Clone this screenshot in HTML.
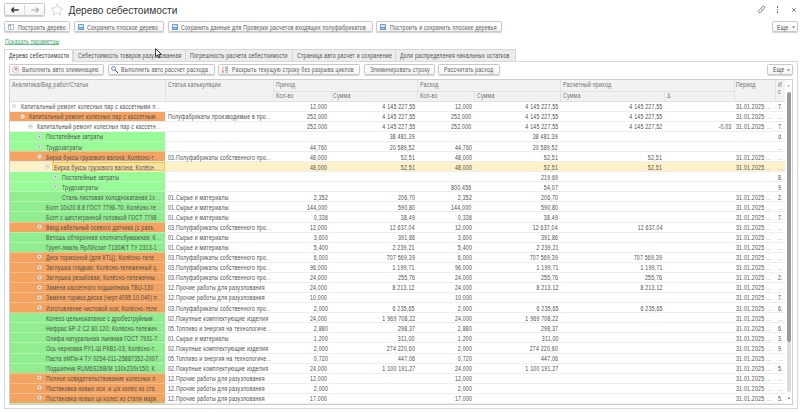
<!DOCTYPE html><html><head><meta charset="utf-8"><style>
*{margin:0;padding:0;box-sizing:border-box}
html,body{width:800px;height:412px;overflow:hidden;background:#fff}
body{position:relative;font-family:"Liberation Sans",sans-serif;font-size:7.0px;color:#4d4d4d}
div{position:absolute}
.t{white-space:pre;letter-spacing:0.3px;transform:scaleX(0.745);transform-origin:0 50%}
.tr{transform-origin:100% 50%}
.tc{transform-origin:50% 50%}
.nt{transform:none;letter-spacing:0}
.btn{border:1px solid #c8c8c8;border-radius:1.5px;background:linear-gradient(#fff,#f4f4f4);box-shadow:0 1px 1px rgba(0,0,0,0.18)}
.tab{background:#ececec;border:1px solid #d6d6d6;border-bottom:none}
.r{text-align:right}
.cell{overflow:hidden}
</style></head><body>
<div class="btn" style="left:4.3px;top:3.3px;width:40.3px;height:13px"></div>
<div style="left:24px;top:4.5px;width:1px;height:10.5px;background:#dcdcdc"></div>
<svg style="position:absolute;left:10px;top:6px" width="10" height="8" viewBox="0 0 10 8"><path d="M1.4 4H8.6M1.4 4L3.9 1.6M1.4 4L3.9 6.4" stroke="#3a3a3a" stroke-width="1.5" fill="none"/></svg>
<svg style="position:absolute;left:29.5px;top:6px" width="10" height="8" viewBox="0 0 10 8"><path d="M1 4H8.5M8.5 4L6.1 1.6M8.5 4L6.1 6.4" stroke="#a8a8a8" stroke-width="1.1" fill="none"/></svg>
<svg style="position:absolute;left:50px;top:3.3px" width="14" height="13.6" viewBox="0 0 24 24"><path d="M12 1.5l3.1 7 7.4.6-5.6 4.9 1.7 7.3L12 17.4l-6.6 3.9 1.7-7.3-5.6-4.9 7.4-.6z" fill="none" stroke="#c5cbd3" stroke-width="1.3"/></svg>
<div class="t nt" style="left:68.5px;top:3.6px;font-size:10.2px;line-height:13px;color:#333">Дерево себестоимости</div>
<svg style="position:absolute;left:756.5px;top:5.3px" width="9.5" height="9" viewBox="0 0 9.5 9"><g fill="none" stroke="#6a6a6a" stroke-width="0.9"><path d="M3.1 4.3L1.7 5.7a1.3 1.3 0 0 0 1.8 1.8L4.9 6.1a1.3 1.3 0 0 0 0-1.8"/><path d="M6.1 4.7L7.5 3.3a1.3 1.3 0 0 0-1.8-1.8L4.3 2.9a1.3 1.3 0 0 0 0 1.8"/></g></svg>
<div style="left:776.6px;top:6.3px;width:1.3px;height:1.3px;background:#555;border-radius:50%"></div>
<div style="left:776.6px;top:8.8px;width:1.3px;height:1.3px;background:#555;border-radius:50%"></div>
<div style="left:776.6px;top:11.3px;width:1.3px;height:1.3px;background:#555;border-radius:50%"></div>
<svg style="position:absolute;left:792.2px;top:7.8px" width="4" height="4" viewBox="0 0 4 4"><path d="M0.2 0.2L3.8 3.8M3.8 0.2L0.2 3.8" stroke="#666" stroke-width="0.8"/></svg>
<div class="btn" style="left:4.40px;top:21.3px;width:65.90px;height:10.999999999999996px"></div>
<div style="left:8.1px;top:24.1px;width:5.6px;height:5.7px;border:1px solid #b4bec8;background:#fff"></div><div style="left:10.3px;top:24.6px;width:0.8px;height:4.8px;background:#b0bac4"></div><div style="left:8.6px;top:24.6px;width:1.2px;height:1px;background:#3fc39a"></div>
<div class="t" style="left:17.6px;top:21.900000000000002px;line-height:10.999999999999996px;color:#5a5a5a">Построить дерево</div>
<div class="btn" style="left:74.20px;top:21.3px;width:89.60px;height:10.999999999999996px"></div>
<div style="left:77.9px;top:23.9px;width:6px;height:6px;background:#6b9dd6;border-radius:0.5px"></div><div style="left:78.9px;top:24.5px;width:4px;height:2.2px;background:#dfe8f2"></div><div style="left:79.4px;top:27.9px;width:3px;height:1.6px;background:#9fbddb"></div>
<div class="t" style="left:87px;top:21.900000000000002px;line-height:10.999999999999996px;color:#5a5a5a">Сохранить плоское дерево</div>
<div class="btn" style="left:167.90px;top:21.3px;width:204.80px;height:10.999999999999996px"></div>
<div style="left:171.5px;top:23.9px;width:6px;height:6px;background:#6b9dd6;border-radius:0.5px"></div><div style="left:172.5px;top:24.5px;width:4px;height:2.2px;background:#dfe8f2"></div><div style="left:173.0px;top:27.9px;width:3px;height:1.6px;background:#9fbddb"></div>
<div class="t" style="left:181px;top:21.900000000000002px;line-height:10.999999999999996px;color:#5a5a5a">Сохранить данные для Проверки расчетов входящих полуфабрикатов</div>
<div class="btn" style="left:376.20px;top:21.3px;width:125.50px;height:10.999999999999996px"></div>
<div style="left:379.8px;top:23.9px;width:6px;height:6px;background:#6b9dd6;border-radius:0.5px"></div><div style="left:380.8px;top:24.5px;width:4px;height:2.2px;background:#dfe8f2"></div><div style="left:381.3px;top:27.9px;width:3px;height:1.6px;background:#9fbddb"></div>
<div class="t" style="left:389.5px;top:21.900000000000002px;line-height:10.999999999999996px;color:#5a5a5a">Построить и сохранить плоские деревья</div>
<div class="btn" style="left:771.5px;top:21.3px;width:26px;height:11px"></div>
<div class="t" style="left:777.2px;top:22px;line-height:11px">Еще</div>
<svg style="position:absolute;left:791.6px;top:25.8px" width="3" height="3" viewBox="0 0 3 3"><path d="M0.2 0.6H2.8L1.5 2.2Z" fill="#555"/></svg>
<div class="t" style="left:5px;top:37.5px;line-height:8px;color:#3da367">Показать параметры</div>
<div style="left:5px;top:44.2px;width:53.5px;height:0.7px;background:#6bbd8c"></div>
<div style="left:4.2px;top:60.6px;width:794px;height:348.4px;border:1px solid #d8d8d8;background:#fff"></div>
<div class="tab" style="left:73px;top:49.4px;width:113.30000000000001px;height:11.4px"></div>
<div class="t" style="left:78px;top:50px;line-height:11.4px">Себестоимость товаров разузлованная</div>
<div class="tab" style="left:185.3px;top:49.4px;width:108.0px;height:11.4px"></div>
<div class="t" style="left:190.3px;top:50px;line-height:11.4px">Погрешность расчета себестоимости</div>
<div class="tab" style="left:292.3px;top:49.4px;width:103.69999999999999px;height:11.4px"></div>
<div class="t" style="left:297.3px;top:50px;line-height:11.4px">Страница авто расчет и сохранение</div>
<div class="tab" style="left:395px;top:49.4px;width:120.70000000000005px;height:11.4px"></div>
<div class="t" style="left:400px;top:50px;line-height:11.4px">Доли распределения начальных остатков</div>
<div style="left:4.2px;top:49.2px;width:69.3px;height:12.4px;border:1px solid #d8d8d8;border-bottom:none;background:#fff"></div>
<div class="t" style="left:9px;top:50px;line-height:11.4px;color:#333">Дерево себестоимости</div>
<div class="btn" style="left:9.00px;top:64.3px;width:95.00px;height:10.900000000000006px"></div>
<div style="left:12.3px;top:66.1px;width:6.6px;height:6.6px;border-radius:50%;border:1px solid #c9c9c9;background:#f4f4f4"></div><svg style="position:absolute;left:13.6px;top:67.4px" width="4" height="4" viewBox="0 0 4 4"><path d="M0.6 0.6L3.4 3.4M3.4 0.6L0.6 3.4" stroke="#ee5a60" stroke-width="0.8"/></svg>
<div class="t" style="left:22px;top:64.89999999999999px;line-height:10.900000000000006px;color:#5a5a5a">Выполнить авто элиминацию</div>
<div class="btn" style="left:107.60px;top:64.3px;width:107.40px;height:10.900000000000006px"></div>
<div style="left:111px;top:66px;width:5px;height:5px;border-radius:50%;border:1px solid #8a9cb4;background:#dce6f2"></div><svg style="position:absolute;left:114.5px;top:69.5px" width="3.5" height="3.5" viewBox="0 0 4 4"><path d="M0.3 0.3L3.6 3.6" stroke="#333" stroke-width="1.1"/></svg>
<div class="t" style="left:121px;top:64.89999999999999px;line-height:10.900000000000006px;color:#5a5a5a">Выполнить авто рассчет расхода</div>
<div class="btn" style="left:218.10px;top:64.3px;width:142.20px;height:10.900000000000006px"></div>
<svg style="position:absolute;left:220.5px;top:65.8px" width="8" height="8" viewBox="0 0 8 8"><path d="M1.9 0.4V6.2" stroke="#f07a4a" stroke-width="0.7"/><path d="M0.7 5.2L1.9 7.4L3.1 5.2Z" fill="#f07a4a"/><path d="M4.1 1.1H7.1M4.1 2.9H7.1M4.1 4.7H7.1" stroke="#7a7a7a" stroke-width="0.9"/><path d="M4.1 6.4H7.1" stroke="#b0b0b0" stroke-width="0.8"/></svg>
<div class="t" style="left:231.6px;top:64.89999999999999px;line-height:10.900000000000006px;color:#5a5a5a">Раскрыть текущую строку без разрыва циклов</div>
<div class="btn" style="left:363.70px;top:64.3px;width:71.00px;height:10.900000000000006px"></div>
<div class="t" style="left:369.5px;top:64.89999999999999px;line-height:10.900000000000006px;color:#5a5a5a">Элиминировать строку</div>
<div class="btn" style="left:438.10px;top:64.3px;width:62.20px;height:10.900000000000006px"></div>
<div class="t" style="left:444px;top:64.89999999999999px;line-height:10.900000000000006px;color:#5a5a5a">Рассчитать расход</div>
<div class="btn" style="left:767px;top:64.3px;width:25.5px;height:10.9px"></div>
<div class="t" style="left:773px;top:65px;line-height:10.9px">Еще</div>
<svg style="position:absolute;left:787.1px;top:68.8px" width="3" height="3" viewBox="0 0 3 3"><path d="M0.2 0.6H2.8L1.5 2.2Z" fill="#555"/></svg>
<div style="left:9.3px;top:79.3px;width:783.5px;height:325.7px;border:1px solid #cfcfcf;background:#fff"></div>
<div style="left:10.3px;top:80.3px;width:774.7px;height:21.0px;background:#f2f2f2"></div>
<div style="left:10.3px;top:100.8px;width:774.7px;height:1px;background:#e0e0e0"></div>
<div style="left:165.4px;top:80.3px;width:1px;height:21.0px;background:#e2e2e2"></div>
<div style="left:273.4px;top:80.3px;width:1px;height:21.0px;background:#e2e2e2"></div>
<div style="left:330.6px;top:90.5px;width:1px;height:10.799999999999997px;background:#e2e2e2"></div>
<div style="left:417px;top:80.3px;width:1px;height:21.0px;background:#e2e2e2"></div>
<div style="left:473.5px;top:90.5px;width:1px;height:10.799999999999997px;background:#e2e2e2"></div>
<div style="left:560px;top:80.3px;width:1px;height:21.0px;background:#e2e2e2"></div>
<div style="left:664.3px;top:90.5px;width:1px;height:10.799999999999997px;background:#e2e2e2"></div>
<div style="left:733.7px;top:80.3px;width:1px;height:21.0px;background:#e2e2e2"></div>
<div style="left:775.3px;top:80.3px;width:1px;height:21.0px;background:#e2e2e2"></div>
<div style="left:273.4px;top:90.5px;width:460.30000000000007px;height:1px;background:#e2e2e2"></div>
<div class="t" style="left:12px;top:81.1px;line-height:8px;color:#6e6e6e">Аналитика/Вид работ/Статьи</div>
<div class="t" style="left:167.6px;top:81.1px;line-height:8px;color:#6e6e6e">Статья калькуляции</div>
<div class="t" style="left:275.8px;top:81.1px;line-height:8px;color:#6e6e6e">Приход</div>
<div class="t" style="left:275.8px;top:92.3px;line-height:8px;color:#6e6e6e">Кол-во</div>
<div class="t" style="left:333px;top:92.3px;line-height:8px;color:#6e6e6e">Сумма</div>
<div class="t" style="left:420px;top:81.1px;line-height:8px;color:#6e6e6e">Расход</div>
<div class="t" style="left:420px;top:92.3px;line-height:8px;color:#6e6e6e">Кол-во</div>
<div class="t" style="left:476.7px;top:92.3px;line-height:8px;color:#6e6e6e">Сумма</div>
<div class="t" style="left:562.5px;top:81.1px;line-height:8px;color:#6e6e6e">Расчетный приход</div>
<div class="t" style="left:562.5px;top:92.3px;line-height:8px;color:#6e6e6e">Сумма</div>
<div class="t" style="left:667px;top:92.3px;line-height:8px;color:#6e6e6e">Δ</div>
<div class="t" style="left:736px;top:81.1px;line-height:8px;color:#6e6e6e">Период</div>
<div class="t" style="left:778px;top:81.1px;line-height:8px;color:#6e6e6e">И</div>
<div class="t" style="left:778px;top:87.8px;line-height:8px;color:#6e6e6e">с</div>
<div style="left:10.3px;top:110.977px;width:155.1px;height:10.077px;background:#f4a460"></div>
<div style="left:10.3px;top:131.131px;width:155.1px;height:10.077px;background:#98fb98"></div>
<div style="left:10.3px;top:141.208px;width:155.1px;height:10.077px;background:#98fb98"></div>
<div style="left:10.3px;top:151.285px;width:155.1px;height:10.077px;background:#f4a460"></div>
<div style="left:10.3px;top:161.36200000000002px;width:774.7px;height:10.077px;background:#fdf1c8"></div>
<div style="left:10.3px;top:171.43900000000002px;width:155.1px;height:10.077px;background:#98fb98"></div>
<div style="left:10.3px;top:181.51600000000002px;width:155.1px;height:10.077px;background:#98fb98"></div>
<div style="left:10.3px;top:191.59300000000002px;width:155.1px;height:10.077px;background:#90ee90"></div>
<div style="left:10.3px;top:201.67000000000002px;width:155.1px;height:10.077px;background:#90ee90"></div>
<div style="left:10.3px;top:211.747px;width:155.1px;height:10.077px;background:#90ee90"></div>
<div style="left:10.3px;top:221.824px;width:155.1px;height:10.077px;background:#f4a460"></div>
<div style="left:10.3px;top:231.901px;width:155.1px;height:10.077px;background:#90ee90"></div>
<div style="left:10.3px;top:241.978px;width:155.1px;height:10.077px;background:#90ee90"></div>
<div style="left:10.3px;top:252.055px;width:155.1px;height:10.077px;background:#f4a460"></div>
<div style="left:10.3px;top:262.132px;width:155.1px;height:10.077px;background:#f4a460"></div>
<div style="left:10.3px;top:272.209px;width:155.1px;height:10.077px;background:#f4a460"></div>
<div style="left:10.3px;top:282.286px;width:155.1px;height:10.077px;background:#f4a460"></div>
<div style="left:10.3px;top:292.363px;width:155.1px;height:10.077px;background:#f4a460"></div>
<div style="left:10.3px;top:302.44px;width:155.1px;height:10.077px;background:#f4a460"></div>
<div style="left:10.3px;top:312.517px;width:155.1px;height:10.077px;background:#90ee90"></div>
<div style="left:10.3px;top:322.594px;width:155.1px;height:10.077px;background:#90ee90"></div>
<div style="left:10.3px;top:332.671px;width:155.1px;height:10.077px;background:#90ee90"></div>
<div style="left:10.3px;top:342.74800000000005px;width:155.1px;height:10.077px;background:#90ee90"></div>
<div style="left:10.3px;top:352.82500000000005px;width:155.1px;height:10.077px;background:#90ee90"></div>
<div style="left:10.3px;top:362.90200000000004px;width:155.1px;height:10.077px;background:#90ee90"></div>
<div style="left:10.3px;top:372.97900000000004px;width:155.1px;height:10.077px;background:#f4a460"></div>
<div style="left:10.3px;top:383.05600000000004px;width:155.1px;height:10.077px;background:#f4a460"></div>
<div style="left:10.3px;top:393.13300000000004px;width:155.1px;height:10.077px;background:#f4a460"></div>
<div style="left:10.3px;top:403.21000000000004px;width:155.1px;height:0.7899999999999636px;background:#90ee90"></div>
<div style="left:165.4px;top:110.677px;width:619.6px;height:1px;background:#eeeeee"></div>
<div style="left:10.3px;top:110.677px;width:155.1px;height:1px;background:#eeeeee"></div>
<div style="left:165.4px;top:120.754px;width:619.6px;height:1px;background:#eeeeee"></div>
<div style="left:10.3px;top:120.754px;width:155.1px;height:1px;background:#eeeeee"></div>
<div style="left:165.4px;top:130.831px;width:619.6px;height:1px;background:#eeeeee"></div>
<div style="left:10.3px;top:130.831px;width:155.1px;height:1px;background:#eeeeee"></div>
<div style="left:165.4px;top:140.908px;width:619.6px;height:1px;background:#eeeeee"></div>
<div style="left:10.3px;top:140.908px;width:155.1px;height:1px;background:rgba(255,255,255,0.3)"></div>
<div style="left:165.4px;top:150.98499999999999px;width:619.6px;height:1px;background:#eeeeee"></div>
<div style="left:10.3px;top:150.98499999999999px;width:155.1px;height:1px;background:rgba(255,255,255,0.3)"></div>
<div style="left:165.4px;top:161.062px;width:619.6px;height:1px;background:#eeeeee"></div>
<div style="left:10.3px;top:161.062px;width:155.1px;height:1px;background:#eeeeee"></div>
<div style="left:165.4px;top:171.139px;width:619.6px;height:1px;background:#eeeeee"></div>
<div style="left:10.3px;top:171.139px;width:155.1px;height:1px;background:#eeeeee"></div>
<div style="left:165.4px;top:181.216px;width:619.6px;height:1px;background:#eeeeee"></div>
<div style="left:10.3px;top:181.216px;width:155.1px;height:1px;background:rgba(255,255,255,0.3)"></div>
<div style="left:165.4px;top:191.293px;width:619.6px;height:1px;background:#eeeeee"></div>
<div style="left:10.3px;top:191.293px;width:155.1px;height:1px;background:rgba(255,255,255,0.3)"></div>
<div style="left:165.4px;top:201.37px;width:619.6px;height:1px;background:#eeeeee"></div>
<div style="left:10.3px;top:201.37px;width:155.1px;height:1px;background:rgba(255,255,255,0.3)"></div>
<div style="left:165.4px;top:211.447px;width:619.6px;height:1px;background:#eeeeee"></div>
<div style="left:10.3px;top:211.447px;width:155.1px;height:1px;background:rgba(255,255,255,0.3)"></div>
<div style="left:165.4px;top:221.524px;width:619.6px;height:1px;background:#eeeeee"></div>
<div style="left:10.3px;top:221.524px;width:155.1px;height:1px;background:rgba(255,255,255,0.3)"></div>
<div style="left:165.4px;top:231.601px;width:619.6px;height:1px;background:#eeeeee"></div>
<div style="left:10.3px;top:231.601px;width:155.1px;height:1px;background:rgba(255,255,255,0.3)"></div>
<div style="left:165.4px;top:241.678px;width:619.6px;height:1px;background:#eeeeee"></div>
<div style="left:10.3px;top:241.678px;width:155.1px;height:1px;background:rgba(255,255,255,0.3)"></div>
<div style="left:165.4px;top:251.755px;width:619.6px;height:1px;background:#eeeeee"></div>
<div style="left:10.3px;top:251.755px;width:155.1px;height:1px;background:rgba(255,255,255,0.3)"></div>
<div style="left:165.4px;top:261.832px;width:619.6px;height:1px;background:#eeeeee"></div>
<div style="left:10.3px;top:261.832px;width:155.1px;height:1px;background:rgba(255,255,255,0.3)"></div>
<div style="left:165.4px;top:271.909px;width:619.6px;height:1px;background:#eeeeee"></div>
<div style="left:10.3px;top:271.909px;width:155.1px;height:1px;background:rgba(255,255,255,0.3)"></div>
<div style="left:165.4px;top:281.986px;width:619.6px;height:1px;background:#eeeeee"></div>
<div style="left:10.3px;top:281.986px;width:155.1px;height:1px;background:rgba(255,255,255,0.3)"></div>
<div style="left:165.4px;top:292.063px;width:619.6px;height:1px;background:#eeeeee"></div>
<div style="left:10.3px;top:292.063px;width:155.1px;height:1px;background:rgba(255,255,255,0.3)"></div>
<div style="left:165.4px;top:302.14px;width:619.6px;height:1px;background:#eeeeee"></div>
<div style="left:10.3px;top:302.14px;width:155.1px;height:1px;background:rgba(255,255,255,0.3)"></div>
<div style="left:165.4px;top:312.217px;width:619.6px;height:1px;background:#eeeeee"></div>
<div style="left:10.3px;top:312.217px;width:155.1px;height:1px;background:rgba(255,255,255,0.3)"></div>
<div style="left:165.4px;top:322.294px;width:619.6px;height:1px;background:#eeeeee"></div>
<div style="left:10.3px;top:322.294px;width:155.1px;height:1px;background:rgba(255,255,255,0.3)"></div>
<div style="left:165.4px;top:332.371px;width:619.6px;height:1px;background:#eeeeee"></div>
<div style="left:10.3px;top:332.371px;width:155.1px;height:1px;background:rgba(255,255,255,0.3)"></div>
<div style="left:165.4px;top:342.44800000000004px;width:619.6px;height:1px;background:#eeeeee"></div>
<div style="left:10.3px;top:342.44800000000004px;width:155.1px;height:1px;background:rgba(255,255,255,0.3)"></div>
<div style="left:165.4px;top:352.52500000000003px;width:619.6px;height:1px;background:#eeeeee"></div>
<div style="left:10.3px;top:352.52500000000003px;width:155.1px;height:1px;background:rgba(255,255,255,0.3)"></div>
<div style="left:165.4px;top:362.60200000000003px;width:619.6px;height:1px;background:#eeeeee"></div>
<div style="left:10.3px;top:362.60200000000003px;width:155.1px;height:1px;background:rgba(255,255,255,0.3)"></div>
<div style="left:165.4px;top:372.67900000000003px;width:619.6px;height:1px;background:#eeeeee"></div>
<div style="left:10.3px;top:372.67900000000003px;width:155.1px;height:1px;background:rgba(255,255,255,0.3)"></div>
<div style="left:165.4px;top:382.75600000000003px;width:619.6px;height:1px;background:#eeeeee"></div>
<div style="left:10.3px;top:382.75600000000003px;width:155.1px;height:1px;background:rgba(255,255,255,0.3)"></div>
<div style="left:165.4px;top:392.833px;width:619.6px;height:1px;background:#eeeeee"></div>
<div style="left:10.3px;top:392.833px;width:155.1px;height:1px;background:rgba(255,255,255,0.3)"></div>
<div style="left:165.4px;top:402.91px;width:619.6px;height:1px;background:#eeeeee"></div>
<div style="left:10.3px;top:402.91px;width:155.1px;height:1px;background:rgba(255,255,255,0.3)"></div>
<div style="left:12.05px;top:103.85px;width:4.4px;height:4.4px;border-radius:50%;background:#dcdcdc"></div>
<div class="t" style="left:20.75px;top:102.3px;line-height:10.05px">Капитальный ремонт колесных пар с кассетными п<span style="color:#9a9a9a">...</span></div>
<div class="t tr" style="right:472.4px;top:102.3px;line-height:10.05px">12,000</div>
<div class="t tr" style="right:385px;top:102.3px;line-height:10.05px">4 145 227,55</div>
<div class="t tr" style="right:328.25px;top:102.3px;line-height:10.05px">12,000</div>
<div class="t tr" style="right:241.75px;top:102.3px;line-height:10.05px">4 145 227,55</div>
<div class="t tr" style="right:137.5px;top:102.3px;line-height:10.05px">4 145 227,55</div>
<div class="t" style="left:735.7px;top:102.3px;line-height:10.05px">31.01.2025 <span style="color:#9a9a9a">...</span></div>
<div class="t" style="left:777.6999999999999px;top:102.3px;line-height:10.05px">7.</div>
<svg style="position:absolute;left:20.0px;top:113.61px" width="5" height="5" viewBox="-2.5 -2.5 5 5"><circle r="2.05" fill="#efefef" stroke="#c4c4c4" stroke-width="0.5"/><path d="M-1.1 0H1.1" stroke="#a0a0a0" stroke-width="0.7"/></svg>
<div class="t" style="left:29.0px;top:112.36px;line-height:10.05px">Капитальный ремонт колесных пар с кассетным<span style="color:#9a9a9a">...</span></div>
<div class="t" style="left:167.70000000000002px;top:112.36px;line-height:10.05px">Полуфабрикаты производимые в про<span style="color:#9a9a9a">...</span></div>
<div class="t tr" style="right:472.4px;top:112.36px;line-height:10.05px">252,000</div>
<div class="t tr" style="right:385px;top:112.36px;line-height:10.05px">4 145 227,55</div>
<div class="t tr" style="right:328.25px;top:112.36px;line-height:10.05px">252,000</div>
<div class="t tr" style="right:241.75px;top:112.36px;line-height:10.05px">4 145 227,55</div>
<div class="t tr" style="right:137.5px;top:112.36px;line-height:10.05px">4 145 227,55</div>
<div class="t" style="left:735.7px;top:112.36px;line-height:10.05px">31.01.2025 <span style="color:#9a9a9a">...</span></div>
<div class="t" style="left:777.6999999999999px;top:112.36px;line-height:10.05px"><span style="color:#9a9a9a">...</span></div>
<svg style="position:absolute;left:28.25px;top:123.67px" width="5" height="5" viewBox="-2.5 -2.5 5 5"><circle r="2.05" fill="#efefef" stroke="#c4c4c4" stroke-width="0.5"/><path d="M-1.1 0H1.1" stroke="#a0a0a0" stroke-width="0.7"/></svg>
<div class="t" style="left:37.25px;top:122.42px;line-height:10.05px">Капитальный ремонт колесных пар с кассетн<span style="color:#9a9a9a">...</span></div>
<div class="t tr" style="right:472.4px;top:122.42px;line-height:10.05px">252,000</div>
<div class="t tr" style="right:385px;top:122.42px;line-height:10.05px">4 145 227,55</div>
<div class="t tr" style="right:328.25px;top:122.42px;line-height:10.05px">252,000</div>
<div class="t tr" style="right:241.75px;top:122.42px;line-height:10.05px">4 145 227,55</div>
<div class="t tr" style="right:137.5px;top:122.42px;line-height:10.05px">4 145 227,52</div>
<div class="t tr" style="right:69.0px;top:122.42px;line-height:10.05px">-0,03</div>
<div class="t" style="left:735.7px;top:122.42px;line-height:10.05px">31.01.2025 <span style="color:#9a9a9a">...</span></div>
<div class="t" style="left:777.6999999999999px;top:122.42px;line-height:10.05px">7.</div>
<svg style="position:absolute;left:36.5px;top:133.73000000000002px" width="5" height="5" viewBox="-2.5 -2.5 5 5"><circle r="2.05" fill="#efefef" stroke="#c4c4c4" stroke-width="0.5"/><path d="M-0.9 0H0.9M0 -0.9V0.9" stroke="#7a7a7a" stroke-width="0.6"/></svg>
<div class="t" style="left:45.5px;top:132.48000000000002px;line-height:10.05px">Постатейные затраты</div>
<div class="t tr" style="right:385px;top:132.48000000000002px;line-height:10.05px">38 481,39</div>
<div class="t tr" style="right:241.75px;top:132.48000000000002px;line-height:10.05px">38 481,39</div>
<div class="t" style="left:777.6999999999999px;top:132.48000000000002px;line-height:10.05px">d.</div>
<svg style="position:absolute;left:36.5px;top:143.79000000000002px" width="5" height="5" viewBox="-2.5 -2.5 5 5"><circle r="2.05" fill="#efefef" stroke="#c4c4c4" stroke-width="0.5"/><path d="M-0.9 0H0.9M0 -0.9V0.9" stroke="#7a7a7a" stroke-width="0.6"/></svg>
<div class="t" style="left:45.5px;top:142.54000000000002px;line-height:10.05px">Трудозатраты</div>
<div class="t tr" style="right:472.4px;top:142.54000000000002px;line-height:10.05px">44,760</div>
<div class="t tr" style="right:385px;top:142.54000000000002px;line-height:10.05px">20 589,52</div>
<div class="t tr" style="right:328.25px;top:142.54000000000002px;line-height:10.05px">44,760</div>
<div class="t tr" style="right:241.75px;top:142.54000000000002px;line-height:10.05px">20 589,52</div>
<div class="t" style="left:777.6999999999999px;top:142.54000000000002px;line-height:10.05px"><span style="color:#9a9a9a">...</span></div>
<svg style="position:absolute;left:36.5px;top:153.85000000000002px" width="5" height="5" viewBox="-2.5 -2.5 5 5"><circle r="2.05" fill="#efefef" stroke="#c4c4c4" stroke-width="0.5"/><path d="M-1.1 0H1.1" stroke="#a0a0a0" stroke-width="0.7"/></svg>
<div class="t" style="left:45.5px;top:152.60000000000002px;line-height:10.05px">Бирка буксы грузового вагона; Колёсно-т<span style="color:#9a9a9a">...</span></div>
<div class="t" style="left:167.70000000000002px;top:152.60000000000002px;line-height:10.05px">03.Полуфабрикаты собственного про<span style="color:#9a9a9a">...</span></div>
<div class="t tr" style="right:472.4px;top:152.60000000000002px;line-height:10.05px">48,000</div>
<div class="t tr" style="right:385px;top:152.60000000000002px;line-height:10.05px">52,51</div>
<div class="t tr" style="right:328.25px;top:152.60000000000002px;line-height:10.05px">48,000</div>
<div class="t tr" style="right:241.75px;top:152.60000000000002px;line-height:10.05px">52,51</div>
<div class="t tr" style="right:137.5px;top:152.60000000000002px;line-height:10.05px">52,51</div>
<div class="t" style="left:735.7px;top:152.60000000000002px;line-height:10.05px">31.01.2025 <span style="color:#9a9a9a">...</span></div>
<div class="t" style="left:777.6999999999999px;top:152.60000000000002px;line-height:10.05px"><span style="color:#9a9a9a">...</span></div>
<svg style="position:absolute;left:44.75px;top:163.91000000000003px" width="5" height="5" viewBox="-2.5 -2.5 5 5"><circle r="2.05" fill="#efefef" stroke="#c4c4c4" stroke-width="0.5"/><path d="M-1.1 0H1.1" stroke="#a0a0a0" stroke-width="0.7"/></svg>
<div style="left:52px;top:161.96200000000002px;width:113.4px;height:9.3px;border:1.4px solid #f7c540;background:#f9e2a0"></div>
<div class="t" style="left:53.75px;top:162.66000000000003px;line-height:10.05px">Бирка буксы грузового вагона; Колёсн<span style="color:#9a9a9a">...</span></div>
<div class="t tr" style="right:472.4px;top:162.66000000000003px;line-height:10.05px">48,000</div>
<div class="t tr" style="right:385px;top:162.66000000000003px;line-height:10.05px">52,51</div>
<div class="t tr" style="right:328.25px;top:162.66000000000003px;line-height:10.05px">48,000</div>
<div class="t tr" style="right:241.75px;top:162.66000000000003px;line-height:10.05px">52,51</div>
<div class="t tr" style="right:137.5px;top:162.66000000000003px;line-height:10.05px">52,51</div>
<div class="t" style="left:735.7px;top:162.66000000000003px;line-height:10.05px">31.01.2025 <span style="color:#9a9a9a">...</span></div>
<div class="t" style="left:777.6999999999999px;top:162.66000000000003px;line-height:10.05px"><span style="color:#9a9a9a">...</span></div>
<svg style="position:absolute;left:53.0px;top:173.97000000000003px" width="5" height="5" viewBox="-2.5 -2.5 5 5"><circle r="2.05" fill="#efefef" stroke="#c4c4c4" stroke-width="0.5"/><path d="M-0.9 0H0.9M0 -0.9V0.9" stroke="#7a7a7a" stroke-width="0.6"/></svg>
<div class="t" style="left:62.0px;top:172.72000000000003px;line-height:10.05px">Постатейные затраты</div>
<div class="t tr" style="right:241.75px;top:172.72000000000003px;line-height:10.05px">219,69</div>
<div class="t" style="left:777.6999999999999px;top:172.72000000000003px;line-height:10.05px">8.</div>
<svg style="position:absolute;left:53.0px;top:184.03000000000003px" width="5" height="5" viewBox="-2.5 -2.5 5 5"><circle r="2.05" fill="#efefef" stroke="#c4c4c4" stroke-width="0.5"/><path d="M-0.9 0H0.9M0 -0.9V0.9" stroke="#7a7a7a" stroke-width="0.6"/></svg>
<div class="t" style="left:62.0px;top:182.78000000000003px;line-height:10.05px">Трудозатраты</div>
<div class="t tr" style="right:328.25px;top:182.78000000000003px;line-height:10.05px">800,456</div>
<div class="t tr" style="right:241.75px;top:182.78000000000003px;line-height:10.05px">54,07</div>
<div class="t" style="left:777.6999999999999px;top:182.78000000000003px;line-height:10.05px">9.</div>
<div class="t" style="left:62.0px;top:192.84000000000003px;line-height:10.05px">Сталь листовая холоднокатаная 1х<span style="color:#9a9a9a">...</span></div>
<div class="t" style="left:167.70000000000002px;top:192.84000000000003px;line-height:10.05px">01.Сырье и материалы</div>
<div class="t tr" style="right:472.4px;top:192.84000000000003px;line-height:10.05px">2,352</div>
<div class="t tr" style="right:385px;top:192.84000000000003px;line-height:10.05px">206,70</div>
<div class="t tr" style="right:328.25px;top:192.84000000000003px;line-height:10.05px">2,352</div>
<div class="t tr" style="right:241.75px;top:192.84000000000003px;line-height:10.05px">206,70</div>
<div class="t" style="left:735.7px;top:192.84000000000003px;line-height:10.05px">31.01.2025 <span style="color:#9a9a9a">...</span></div>
<div class="t" style="left:777.6999999999999px;top:192.84000000000003px;line-height:10.05px">2.</div>
<div class="t" style="left:45.5px;top:202.90000000000003px;line-height:10.05px">Болт 10х20 8.8 ГОСТ 7798-70; Колёсно-те<span style="color:#9a9a9a">...</span></div>
<div class="t" style="left:167.70000000000002px;top:202.90000000000003px;line-height:10.05px">01.Сырье и материалы</div>
<div class="t tr" style="right:472.4px;top:202.90000000000003px;line-height:10.05px">144,000</div>
<div class="t tr" style="right:385px;top:202.90000000000003px;line-height:10.05px">590,80</div>
<div class="t tr" style="right:328.25px;top:202.90000000000003px;line-height:10.05px">144,000</div>
<div class="t tr" style="right:241.75px;top:202.90000000000003px;line-height:10.05px">590,80</div>
<div class="t" style="left:735.7px;top:202.90000000000003px;line-height:10.05px">31.01.2025 <span style="color:#9a9a9a">...</span></div>
<div class="t" style="left:777.6999999999999px;top:202.90000000000003px;line-height:10.05px"><span style="color:#9a9a9a">...</span></div>
<div class="t" style="left:45.5px;top:212.96000000000004px;line-height:10.05px">Болт с шестигранной головкой ГОСТ 7798<span style="color:#9a9a9a">...</span></div>
<div class="t" style="left:167.70000000000002px;top:212.96000000000004px;line-height:10.05px">01.Сырье и материалы</div>
<div class="t tr" style="right:472.4px;top:212.96000000000004px;line-height:10.05px">0,336</div>
<div class="t tr" style="right:385px;top:212.96000000000004px;line-height:10.05px">38,49</div>
<div class="t tr" style="right:328.25px;top:212.96000000000004px;line-height:10.05px">0,336</div>
<div class="t tr" style="right:241.75px;top:212.96000000000004px;line-height:10.05px">38,49</div>
<div class="t" style="left:735.7px;top:212.96000000000004px;line-height:10.05px">31.01.2025 <span style="color:#9a9a9a">...</span></div>
<div class="t" style="left:777.6999999999999px;top:212.96000000000004px;line-height:10.05px">7.</div>
<svg style="position:absolute;left:36.5px;top:224.27px" width="5" height="5" viewBox="-2.5 -2.5 5 5"><circle r="2.05" fill="#efefef" stroke="#c4c4c4" stroke-width="0.5"/><path d="M-0.9 0H0.9M0 -0.9V0.9" stroke="#7a7a7a" stroke-width="0.6"/></svg>
<div class="t" style="left:45.5px;top:223.02px;line-height:10.05px">Ввод кабельный осевого датчика (с разъ<span style="color:#9a9a9a">...</span></div>
<div class="t" style="left:167.70000000000002px;top:223.02px;line-height:10.05px">03.Полуфабрикаты собственного про<span style="color:#9a9a9a">...</span></div>
<div class="t tr" style="right:472.4px;top:223.02px;line-height:10.05px">12,000</div>
<div class="t tr" style="right:385px;top:223.02px;line-height:10.05px">12 637,04</div>
<div class="t tr" style="right:328.25px;top:223.02px;line-height:10.05px">12,000</div>
<div class="t tr" style="right:241.75px;top:223.02px;line-height:10.05px">12 637,04</div>
<div class="t tr" style="right:137.5px;top:223.02px;line-height:10.05px">12 637,04</div>
<div class="t" style="left:735.7px;top:223.02px;line-height:10.05px">31.01.2025 <span style="color:#9a9a9a">...</span></div>
<div class="t" style="left:777.6999999999999px;top:223.02px;line-height:10.05px"><span style="color:#9a9a9a">...</span></div>
<div class="t" style="left:45.5px;top:233.08px;line-height:10.05px">Ветошь обтирочная хлопчатобумажная; К<span style="color:#9a9a9a">...</span></div>
<div class="t" style="left:167.70000000000002px;top:233.08px;line-height:10.05px">01.Сырье и материалы</div>
<div class="t tr" style="right:472.4px;top:233.08px;line-height:10.05px">3,600</div>
<div class="t tr" style="right:385px;top:233.08px;line-height:10.05px">391,86</div>
<div class="t tr" style="right:328.25px;top:233.08px;line-height:10.05px">3,600</div>
<div class="t tr" style="right:241.75px;top:233.08px;line-height:10.05px">391,86</div>
<div class="t" style="left:735.7px;top:233.08px;line-height:10.05px">31.01.2025 <span style="color:#9a9a9a">...</span></div>
<div class="t" style="left:777.6999999999999px;top:233.08px;line-height:10.05px"><span style="color:#9a9a9a">...</span></div>
<div class="t" style="left:45.5px;top:243.14000000000001px;line-height:10.05px">Грунт-эмаль ЯрЛИсоат 7130ЖТ ТУ 2313-1<span style="color:#9a9a9a">...</span></div>
<div class="t" style="left:167.70000000000002px;top:243.14000000000001px;line-height:10.05px">01.Сырье и материалы</div>
<div class="t tr" style="right:472.4px;top:243.14000000000001px;line-height:10.05px">5,400</div>
<div class="t tr" style="right:385px;top:243.14000000000001px;line-height:10.05px">2 239,21</div>
<div class="t tr" style="right:328.25px;top:243.14000000000001px;line-height:10.05px">5,400</div>
<div class="t tr" style="right:241.75px;top:243.14000000000001px;line-height:10.05px">2 239,21</div>
<div class="t" style="left:735.7px;top:243.14000000000001px;line-height:10.05px">31.01.2025 <span style="color:#9a9a9a">...</span></div>
<div class="t" style="left:777.6999999999999px;top:243.14000000000001px;line-height:10.05px"><span style="color:#9a9a9a">...</span></div>
<svg style="position:absolute;left:36.5px;top:254.45px" width="5" height="5" viewBox="-2.5 -2.5 5 5"><circle r="2.05" fill="#efefef" stroke="#c4c4c4" stroke-width="0.5"/><path d="M-0.9 0H0.9M0 -0.9V0.9" stroke="#7a7a7a" stroke-width="0.6"/></svg>
<div class="t" style="left:45.5px;top:253.20000000000002px;line-height:10.05px">Диск тормозной (для КТЦ); Колёсно-теле<span style="color:#9a9a9a">...</span></div>
<div class="t" style="left:167.70000000000002px;top:253.20000000000002px;line-height:10.05px">03.Полуфабрикаты собственного про<span style="color:#9a9a9a">...</span></div>
<div class="t tr" style="right:472.4px;top:253.20000000000002px;line-height:10.05px">6,000</div>
<div class="t tr" style="right:385px;top:253.20000000000002px;line-height:10.05px">707 569,39</div>
<div class="t tr" style="right:328.25px;top:253.20000000000002px;line-height:10.05px">6,000</div>
<div class="t tr" style="right:241.75px;top:253.20000000000002px;line-height:10.05px">707 569,39</div>
<div class="t tr" style="right:137.5px;top:253.20000000000002px;line-height:10.05px">707 569,39</div>
<div class="t" style="left:735.7px;top:253.20000000000002px;line-height:10.05px">31.01.2025 <span style="color:#9a9a9a">...</span></div>
<div class="t" style="left:777.6999999999999px;top:253.20000000000002px;line-height:10.05px"><span style="color:#9a9a9a">...</span></div>
<svg style="position:absolute;left:36.5px;top:264.51000000000005px" width="5" height="5" viewBox="-2.5 -2.5 5 5"><circle r="2.05" fill="#efefef" stroke="#c4c4c4" stroke-width="0.5"/><path d="M-0.9 0H0.9M0 -0.9V0.9" stroke="#7a7a7a" stroke-width="0.6"/></svg>
<div class="t" style="left:45.5px;top:263.26000000000005px;line-height:10.05px">Заглушка гладкая; Колёсно-тележечный ц<span style="color:#9a9a9a">...</span></div>
<div class="t" style="left:167.70000000000002px;top:263.26000000000005px;line-height:10.05px">03.Полуфабрикаты собственного про<span style="color:#9a9a9a">...</span></div>
<div class="t tr" style="right:472.4px;top:263.26000000000005px;line-height:10.05px">96,000</div>
<div class="t tr" style="right:385px;top:263.26000000000005px;line-height:10.05px">1 199,71</div>
<div class="t tr" style="right:328.25px;top:263.26000000000005px;line-height:10.05px">96,000</div>
<div class="t tr" style="right:241.75px;top:263.26000000000005px;line-height:10.05px">1 199,71</div>
<div class="t tr" style="right:137.5px;top:263.26000000000005px;line-height:10.05px">1 199,71</div>
<div class="t" style="left:735.7px;top:263.26000000000005px;line-height:10.05px">31.01.2025 <span style="color:#9a9a9a">...</span></div>
<div class="t" style="left:777.6999999999999px;top:263.26000000000005px;line-height:10.05px"><span style="color:#9a9a9a">...</span></div>
<svg style="position:absolute;left:36.5px;top:274.57px" width="5" height="5" viewBox="-2.5 -2.5 5 5"><circle r="2.05" fill="#efefef" stroke="#c4c4c4" stroke-width="0.5"/><path d="M-0.9 0H0.9M0 -0.9V0.9" stroke="#7a7a7a" stroke-width="0.6"/></svg>
<div class="t" style="left:45.5px;top:273.32px;line-height:10.05px">Заглушка резьбовая; Колёсно-тележечны<span style="color:#9a9a9a">...</span></div>
<div class="t" style="left:167.70000000000002px;top:273.32px;line-height:10.05px">03.Полуфабрикаты собственного про<span style="color:#9a9a9a">...</span></div>
<div class="t tr" style="right:472.4px;top:273.32px;line-height:10.05px">24,000</div>
<div class="t tr" style="right:385px;top:273.32px;line-height:10.05px">255,76</div>
<div class="t tr" style="right:328.25px;top:273.32px;line-height:10.05px">24,000</div>
<div class="t tr" style="right:241.75px;top:273.32px;line-height:10.05px">255,76</div>
<div class="t tr" style="right:137.5px;top:273.32px;line-height:10.05px">255,76</div>
<div class="t" style="left:735.7px;top:273.32px;line-height:10.05px">31.01.2025 <span style="color:#9a9a9a">...</span></div>
<div class="t" style="left:777.6999999999999px;top:273.32px;line-height:10.05px">2.</div>
<svg style="position:absolute;left:36.5px;top:284.63000000000005px" width="5" height="5" viewBox="-2.5 -2.5 5 5"><circle r="2.05" fill="#efefef" stroke="#c4c4c4" stroke-width="0.5"/><path d="M-0.9 0H0.9M0 -0.9V0.9" stroke="#7a7a7a" stroke-width="0.6"/></svg>
<div class="t" style="left:45.5px;top:283.38000000000005px;line-height:10.05px">Замена кассетного подшипника TBU-130 <span style="color:#9a9a9a">...</span></div>
<div class="t" style="left:167.70000000000002px;top:283.38000000000005px;line-height:10.05px">12.Прочие работы для разузлования</div>
<div class="t tr" style="right:472.4px;top:283.38000000000005px;line-height:10.05px">24,000</div>
<div class="t tr" style="right:385px;top:283.38000000000005px;line-height:10.05px">8 213,12</div>
<div class="t tr" style="right:328.25px;top:283.38000000000005px;line-height:10.05px">24,000</div>
<div class="t tr" style="right:241.75px;top:283.38000000000005px;line-height:10.05px">8 213,12</div>
<div class="t tr" style="right:137.5px;top:283.38000000000005px;line-height:10.05px">8 213,12</div>
<div class="t" style="left:735.7px;top:283.38000000000005px;line-height:10.05px">31.01.2025 <span style="color:#9a9a9a">...</span></div>
<div class="t" style="left:777.6999999999999px;top:283.38000000000005px;line-height:10.05px"><span style="color:#9a9a9a">...</span></div>
<svg style="position:absolute;left:36.5px;top:294.69px" width="5" height="5" viewBox="-2.5 -2.5 5 5"><circle r="2.05" fill="#efefef" stroke="#c4c4c4" stroke-width="0.5"/><path d="M-0.9 0H0.9M0 -0.9V0.9" stroke="#7a7a7a" stroke-width="0.6"/></svg>
<div class="t" style="left:45.5px;top:293.44px;line-height:10.05px">Замена тормоз.диска (черт.4095.10.040) п<span style="color:#9a9a9a">...</span></div>
<div class="t" style="left:167.70000000000002px;top:293.44px;line-height:10.05px">12.Прочие работы для разузлования</div>
<div class="t tr" style="right:472.4px;top:293.44px;line-height:10.05px">10,000</div>
<div class="t tr" style="right:328.25px;top:293.44px;line-height:10.05px">10,000</div>
<div class="t" style="left:735.7px;top:293.44px;line-height:10.05px">31.01.2025 <span style="color:#9a9a9a">...</span></div>
<div class="t" style="left:777.6999999999999px;top:293.44px;line-height:10.05px">7.</div>
<svg style="position:absolute;left:36.5px;top:304.75000000000006px" width="5" height="5" viewBox="-2.5 -2.5 5 5"><circle r="2.05" fill="#efefef" stroke="#c4c4c4" stroke-width="0.5"/><path d="M-0.9 0H0.9M0 -0.9V0.9" stroke="#7a7a7a" stroke-width="0.6"/></svg>
<div class="t" style="left:45.5px;top:303.50000000000006px;line-height:10.05px">Изготовление чистовой оси; Колёсно-теле<span style="color:#9a9a9a">...</span></div>
<div class="t" style="left:167.70000000000002px;top:303.50000000000006px;line-height:10.05px">03.Полуфабрикаты собственного про<span style="color:#9a9a9a">...</span></div>
<div class="t tr" style="right:472.4px;top:303.50000000000006px;line-height:10.05px">2,000</div>
<div class="t tr" style="right:385px;top:303.50000000000006px;line-height:10.05px">6 235,65</div>
<div class="t tr" style="right:328.25px;top:303.50000000000006px;line-height:10.05px">2,000</div>
<div class="t tr" style="right:241.75px;top:303.50000000000006px;line-height:10.05px">6 235,65</div>
<div class="t tr" style="right:137.5px;top:303.50000000000006px;line-height:10.05px">6 235,65</div>
<div class="t" style="left:735.7px;top:303.50000000000006px;line-height:10.05px">31.01.2025 <span style="color:#9a9a9a">...</span></div>
<div class="t" style="left:777.6999999999999px;top:303.50000000000006px;line-height:10.05px">6.</div>
<div class="t" style="left:45.5px;top:313.56px;line-height:10.05px">Колесо цельнокатаное с дробеструйным <span style="color:#9a9a9a">...</span></div>
<div class="t" style="left:167.70000000000002px;top:313.56px;line-height:10.05px">02.Покупные комплектующие изделия</div>
<div class="t tr" style="right:472.4px;top:313.56px;line-height:10.05px">24,000</div>
<div class="t tr" style="right:385px;top:313.56px;line-height:10.05px">1 969 708,22</div>
<div class="t tr" style="right:328.25px;top:313.56px;line-height:10.05px">24,000</div>
<div class="t tr" style="right:241.75px;top:313.56px;line-height:10.05px">1 969 708,22</div>
<div class="t" style="left:735.7px;top:313.56px;line-height:10.05px">31.01.2025 <span style="color:#9a9a9a">...</span></div>
<div class="t" style="left:777.6999999999999px;top:313.56px;line-height:10.05px"><span style="color:#9a9a9a">...</span></div>
<div class="t" style="left:45.5px;top:323.62000000000006px;line-height:10.05px">Нефрас БР-2 С2 80.120; Колёсно-тележеч<span style="color:#9a9a9a">...</span></div>
<div class="t" style="left:167.70000000000002px;top:323.62000000000006px;line-height:10.05px">05.Топливо и энергия на технологиче<span style="color:#9a9a9a">...</span></div>
<div class="t tr" style="right:472.4px;top:323.62000000000006px;line-height:10.05px">2,880</div>
<div class="t tr" style="right:385px;top:323.62000000000006px;line-height:10.05px">298,37</div>
<div class="t tr" style="right:328.25px;top:323.62000000000006px;line-height:10.05px">2,880</div>
<div class="t tr" style="right:241.75px;top:323.62000000000006px;line-height:10.05px">298,37</div>
<div class="t" style="left:735.7px;top:323.62000000000006px;line-height:10.05px">31.01.2025 <span style="color:#9a9a9a">...</span></div>
<div class="t" style="left:777.6999999999999px;top:323.62000000000006px;line-height:10.05px">6.</div>
<div class="t" style="left:45.5px;top:333.68px;line-height:10.05px">Олифа натуральная льняная ГОСТ 7931-7<span style="color:#9a9a9a">...</span></div>
<div class="t" style="left:167.70000000000002px;top:333.68px;line-height:10.05px">01.Сырье и материалы</div>
<div class="t tr" style="right:472.4px;top:333.68px;line-height:10.05px">1,200</div>
<div class="t tr" style="right:385px;top:333.68px;line-height:10.05px">311,00</div>
<div class="t tr" style="right:328.25px;top:333.68px;line-height:10.05px">1,200</div>
<div class="t tr" style="right:241.75px;top:333.68px;line-height:10.05px">311,00</div>
<div class="t" style="left:735.7px;top:333.68px;line-height:10.05px">31.01.2025 <span style="color:#9a9a9a">...</span></div>
<div class="t" style="left:777.6999999999999px;top:333.68px;line-height:10.05px">3.</div>
<div class="t" style="left:45.5px;top:343.74px;line-height:10.05px">Ось черновая РУ1-Ш РКВ1-03; Колёсно-т<span style="color:#9a9a9a">...</span></div>
<div class="t" style="left:167.70000000000002px;top:343.74px;line-height:10.05px">02.Покупные комплектующие изделия</div>
<div class="t tr" style="right:472.4px;top:343.74px;line-height:10.05px">2,000</div>
<div class="t tr" style="right:385px;top:343.74px;line-height:10.05px">274 220,60</div>
<div class="t tr" style="right:328.25px;top:343.74px;line-height:10.05px">2,000</div>
<div class="t tr" style="right:241.75px;top:343.74px;line-height:10.05px">274 220,60</div>
<div class="t" style="left:735.7px;top:343.74px;line-height:10.05px">31.01.2025 <span style="color:#9a9a9a">...</span></div>
<div class="t" style="left:777.6999999999999px;top:343.74px;line-height:10.05px">9.</div>
<div class="t" style="left:45.5px;top:353.8px;line-height:10.05px">Паста эМПи-4 ТУ 0254-011-25887352-2007<span style="color:#9a9a9a">...</span></div>
<div class="t" style="left:167.70000000000002px;top:353.8px;line-height:10.05px">05.Топливо и энергия на технологиче<span style="color:#9a9a9a">...</span></div>
<div class="t tr" style="right:472.4px;top:353.8px;line-height:10.05px">0,720</div>
<div class="t tr" style="right:385px;top:353.8px;line-height:10.05px">447,06</div>
<div class="t tr" style="right:328.25px;top:353.8px;line-height:10.05px">0,720</div>
<div class="t tr" style="right:241.75px;top:353.8px;line-height:10.05px">447,06</div>
<div class="t" style="left:735.7px;top:353.8px;line-height:10.05px">31.01.2025 <span style="color:#9a9a9a">...</span></div>
<div class="t" style="left:777.6999999999999px;top:353.8px;line-height:10.05px"><span style="color:#9a9a9a">...</span></div>
<div class="t" style="left:45.5px;top:363.86px;line-height:10.05px">Подшипник RUM6S26B/M 130x230x150; К<span style="color:#9a9a9a">...</span></div>
<div class="t" style="left:167.70000000000002px;top:363.86px;line-height:10.05px">02.Покупные комплектующие изделия</div>
<div class="t tr" style="right:472.4px;top:363.86px;line-height:10.05px">24,000</div>
<div class="t tr" style="right:385px;top:363.86px;line-height:10.05px">1 100 191,27</div>
<div class="t tr" style="right:328.25px;top:363.86px;line-height:10.05px">24,000</div>
<div class="t tr" style="right:241.75px;top:363.86px;line-height:10.05px">1 100 191,27</div>
<div class="t" style="left:735.7px;top:363.86px;line-height:10.05px">31.01.2025 <span style="color:#9a9a9a">...</span></div>
<div class="t" style="left:777.6999999999999px;top:363.86px;line-height:10.05px">5.</div>
<svg style="position:absolute;left:36.5px;top:375.17px" width="5" height="5" viewBox="-2.5 -2.5 5 5"><circle r="2.05" fill="#efefef" stroke="#c4c4c4" stroke-width="0.5"/><path d="M-0.9 0H0.9M0 -0.9V0.9" stroke="#7a7a7a" stroke-width="0.6"/></svg>
<div class="t" style="left:45.5px;top:373.92px;line-height:10.05px">Полное освидетельствование колесных п<span style="color:#9a9a9a">...</span></div>
<div class="t" style="left:167.70000000000002px;top:373.92px;line-height:10.05px">12.Прочие работы для разузлования</div>
<div class="t tr" style="right:472.4px;top:373.92px;line-height:10.05px">12,000</div>
<div class="t tr" style="right:328.25px;top:373.92px;line-height:10.05px">12,000</div>
<div class="t" style="left:735.7px;top:373.92px;line-height:10.05px">31.01.2025 <span style="color:#9a9a9a">...</span></div>
<div class="t" style="left:777.6999999999999px;top:373.92px;line-height:10.05px"><span style="color:#9a9a9a">...</span></div>
<svg style="position:absolute;left:36.5px;top:385.23px" width="5" height="5" viewBox="-2.5 -2.5 5 5"><circle r="2.05" fill="#efefef" stroke="#c4c4c4" stroke-width="0.5"/><path d="M-0.9 0H0.9M0 -0.9V0.9" stroke="#7a7a7a" stroke-width="0.6"/></svg>
<div class="t" style="left:45.5px;top:383.98px;line-height:10.05px">Постановка новых оси  и ц/к колес из ста<span style="color:#9a9a9a">...</span></div>
<div class="t" style="left:167.70000000000002px;top:383.98px;line-height:10.05px">12.Прочие работы для разузлования</div>
<div class="t tr" style="right:472.4px;top:383.98px;line-height:10.05px">2,000</div>
<div class="t tr" style="right:328.25px;top:383.98px;line-height:10.05px">2,000</div>
<div class="t" style="left:735.7px;top:383.98px;line-height:10.05px">31.01.2025 <span style="color:#9a9a9a">...</span></div>
<div class="t" style="left:777.6999999999999px;top:383.98px;line-height:10.05px"><span style="color:#9a9a9a">...</span></div>
<svg style="position:absolute;left:36.5px;top:395.29px" width="5" height="5" viewBox="-2.5 -2.5 5 5"><circle r="2.05" fill="#efefef" stroke="#c4c4c4" stroke-width="0.5"/><path d="M-0.9 0H0.9M0 -0.9V0.9" stroke="#7a7a7a" stroke-width="0.6"/></svg>
<div class="t" style="left:45.5px;top:394.04px;line-height:10.05px">Постановка новых цк колес из стали марк<span style="color:#9a9a9a">...</span></div>
<div class="t" style="left:167.70000000000002px;top:394.04px;line-height:10.05px">12.Прочие работы для разузлования</div>
<div class="t tr" style="right:472.4px;top:394.04px;line-height:10.05px">17,000</div>
<div class="t tr" style="right:328.25px;top:394.04px;line-height:10.05px">17,000</div>
<div class="t" style="left:735.7px;top:394.04px;line-height:10.05px">31.01.2025 <span style="color:#9a9a9a">...</span></div>
<div class="t" style="left:777.6999999999999px;top:394.04px;line-height:10.05px">5.</div>
<div style="left:786.5px;top:92.2px;width:4.8px;height:300.3px;border-radius:2.4px;background:#dcdcdc"></div>
<div style="left:786.5px;top:92.2px;width:4.8px;height:249.6px;border-radius:2.4px;background:#9a9a9a"></div>
<svg style="position:absolute;left:787.3px;top:84px" width="3" height="3" viewBox="0 0 3 3"><path d="M0 2.4L1.5 0.4L3 2.4Z" fill="#aaa"/></svg>
<svg style="position:absolute;left:787.8px;top:397.3px" width="3" height="3" viewBox="0 0 3 3"><path d="M0.5 0.3L2.3 1.3L0.5 2.3Z" fill="#444"/></svg>
<svg style="position:absolute;left:154.5px;top:47.5px" width="8" height="11" viewBox="0 0 8 11"><path d="M0.6 0.6V8.6L2.5 6.9L3.8 9.9L5.1 9.3L3.8 6.4H6.4Z" fill="#fff" stroke="#333" stroke-width="1"/></svg>
</body></html>
